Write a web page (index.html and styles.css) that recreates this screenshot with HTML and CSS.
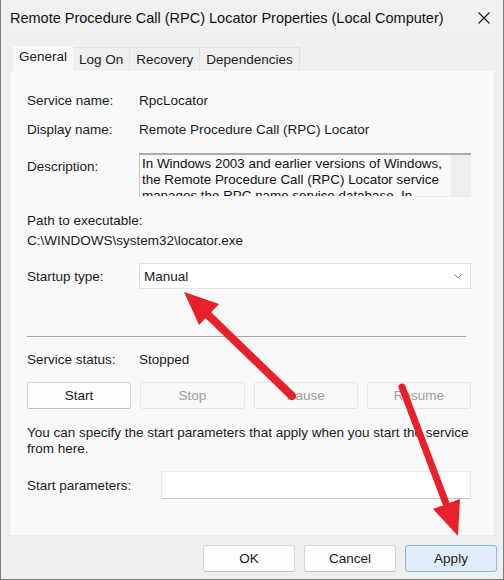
FILE: index.html
```html
<!DOCTYPE html>
<html lang="en">
<head>
  <meta charset="UTF-8">
  <title>Remote Procedure Call (RPC) Locator Properties</title>
  <link rel="stylesheet" href="styles.css">
</head>
<body>

  <div class="window">
    <!-- Title bar -->
    <div class="titlebar">
      <span class="title">Remote Procedure Call (RPC) Locator Properties (Local Computer)</span>
      <svg class="close" width="12" height="12" viewBox="0 0 12 12">
        <path d="M0.5 0.5 L11.5 11.5 M11.5 0.5 L0.5 11.5" stroke="#1a1a1a" stroke-width="1.1" fill="none"/>
      </svg>
    </div>

    <!-- Tabs -->
    <div class="tabs">
      <div class="tab active">General</div>
      <div class="tab">Log On</div>
      <div class="tab">Recovery</div>
      <div class="tab">Dependencies</div>
    </div>

    <div class="panel">
      <div class="row"><span class="label">Service name:</span><span>RpcLocator</span></div>
      <div class="row gap9"><span class="label">Display name:</span><span>Remote Procedure Call (RPC) Locator</span></div>

      <div class="row desc-row">
        <span class="label desc-label">Description:</span>
        <div class="desc-box">
          <div class="desc-text">In Windows 2003 and earlier versions of Windows, the Remote Procedure Call (RPC) Locator service manages the RPC name service database. In</div>
          <div class="scrollbar"></div>
        </div>
      </div>

      <div class="path">
        <div>Path to executable:</div>
        <div>C:\WINDOWS\system32\locator.exe</div>
      </div>

      <div class="row startup">
        <span class="label">Startup type:</span>
        <div class="combo">
          <span>Manual</span>
          <svg width="8" height="5" viewBox="0 0 8 5"><polyline points="0.5,0.5 4,4 7.5,0.5" stroke="#8a8a8a" fill="none" stroke-width="1"/></svg>
        </div>
      </div>

      <div class="separator"></div>

      <div class="row status"><span class="label">Service status:</span><span>Stopped</span></div>

      <div class="svc-buttons">
        <button class="btn">Start</button>
        <button class="btn disabled">Stop</button>
        <button class="btn disabled">Pause</button>
        <button class="btn disabled">Resume</button>
      </div>

      <p class="hint">You can specify the start parameters that apply when you start the service from here.</p>

      <div class="row params">
        <span class="label params-label">Start parameters:</span>
        <div class="input"></div>
      </div>
    </div>

    <div class="footer">
      <button class="btn dlg">OK</button>
      <button class="btn dlg">Cancel</button>
      <button class="btn dlg apply">Apply</button>
    </div>
  </div>

  <!-- Annotation arrows drawn over the dialog -->
  <svg class="arrows" width="504" height="580" viewBox="0 0 504 580">
    <line x1="292" y1="396" x2="204" y2="311" stroke="#e8202a" stroke-width="8" stroke-linecap="round"/>
    <polygon points="184,292 199,325 219,304" fill="#e8202a"/>
    <line x1="402" y1="387" x2="447" y2="506" stroke="#e8202a" stroke-width="7" stroke-linecap="round"/>
    <polygon points="458,536 433,509 460,499" fill="#e8202a"/>
  </svg>

</body>
</html>
```

FILE: styles.css
```css
html, body {
  margin: 0;
  padding: 0;
  font-family: "Liberation Sans", Arial, sans-serif;
  font-size: 13.5px;
  color: #1a1a1a;
  background: #efefef;
}

.window {
  position: relative;
  width: 504px;
  height: 580px;
  box-sizing: border-box;
  border-left: 1px solid #7d7d7d;
  border-right: 1px solid #7d7d7d;
  border-bottom: 1px solid #7d7d7d;
  background: #efefef;
  display: flex;
  flex-direction: column;
}

.titlebar {
  height: 36px;
  display: flex;
  align-items: center;
  justify-content: space-between;
  padding: 0 13px 0 9px;
  background: #f2f0ee;
}

.title {
  font-size: 14.5px;
  color: #111;
}

.tabs {
  display: flex;
  align-items: flex-end;
  height: 35px;
  padding-left: 12px;
}

.tab {
  height: 23px;
  line-height: 23px;
  padding: 0 6px;
  border: 1px solid #e2e2e2;
  border-bottom: none;
  border-left: none;
  background: #efefef;
}

.tab.active {
  height: 25px;
  line-height: 22px;
  background: #f9f9f9;
  border: none;
  padding: 0 6px;
}

.panel {
  margin: 0 8px;
  height: 465px;
  box-sizing: border-box;
  background: #f9f9f9;
  border: 1px solid #ebebeb;
  border-top: none;
  padding: 19px 23px 0 17px;
  display: flex;
  flex-direction: column;
}

.row {
  display: flex;
  align-items: center;
  height: 20px;
}

.label {
  width: 112px;
  flex-shrink: 0;
}

.gap9 { margin-top: 9px; }

.desc-row {
  margin-top: 14px;
  height: 44px;
  align-items: flex-start;
}

.desc-label { margin-top: 6px; }

.desc-box {
  flex: 1;
  height: 44px;
  box-sizing: border-box;
  border-top: 2px solid #ababab;
  border-left: 1px solid #c8c8c8;
  border-bottom: 1px solid #ededed;
  background: #f9f9f9;
  display: flex;
  overflow: hidden;
}

.desc-text {
  flex: 1;
  padding: 1px 2px 0 2px;
  font-family: "Liberation Sans", Arial, sans-serif;
  font-size: 13.4px;
  line-height: 16px;
  color: #111;
  overflow: hidden;
}

.scrollbar {
  width: 20px;
  background: #eeeeee;
}

.path {
  margin-top: 14px;
  line-height: 20px;
}

.startup {
  margin-top: 12px;
  height: 26px;
}

.combo {
  flex: 1;
  height: 26px;
  box-sizing: border-box;
  background: #fff;
  border: 1px solid #e2e2e2;
  display: flex;
  align-items: center;
  justify-content: space-between;
  padding: 0 8px 0 4px;
}

.separator {
  margin-top: 47px;
  height: 1px;
  margin-right: 5px;
  background: #a8a8a8;
}

.status { margin-top: 12px; }

.svc-buttons {
  margin-top: 13px;
  display: grid;
  grid-template-columns: repeat(4, 1fr);
  gap: 9px;
}

.btn {
  height: 27px;
  font-family: inherit;
  font-size: 13.5px;
  color: #1a1a1a;
  background: #fdfdfd;
  border: 1px solid #d6d6d6;
  border-bottom-color: #bfbfbf;
  border-radius: 3px;
  padding: 0;
}

.btn.disabled {
  color: #9d9d9d;
  background: #f9f9f9;
  border-color: #e6e6e6;
}

.hint {
  margin: 16px 0 0 0;
  line-height: 16px;
}

.params {
  margin-top: 14px;
  height: 28px;
}

.params-label { width: 134px; }

.input {
  flex: 1;
  height: 28px;
  box-sizing: border-box;
  background: #fff;
  border: 1px solid #ececec;
  border-bottom-color: #c6c6c6;
}

.footer {
  display: flex;
  justify-content: flex-end;
  gap: 9px;
  padding: 9px 6px 0 0;
}

.btn.dlg {
  width: 92px;
  height: 27px;
}

.btn.apply {
  background: #e0ecf9;
  border: 1px solid #8db8e6;
}

.arrows {
  position: absolute;
  top: 0;
  left: 0;
  pointer-events: none;
}
```
